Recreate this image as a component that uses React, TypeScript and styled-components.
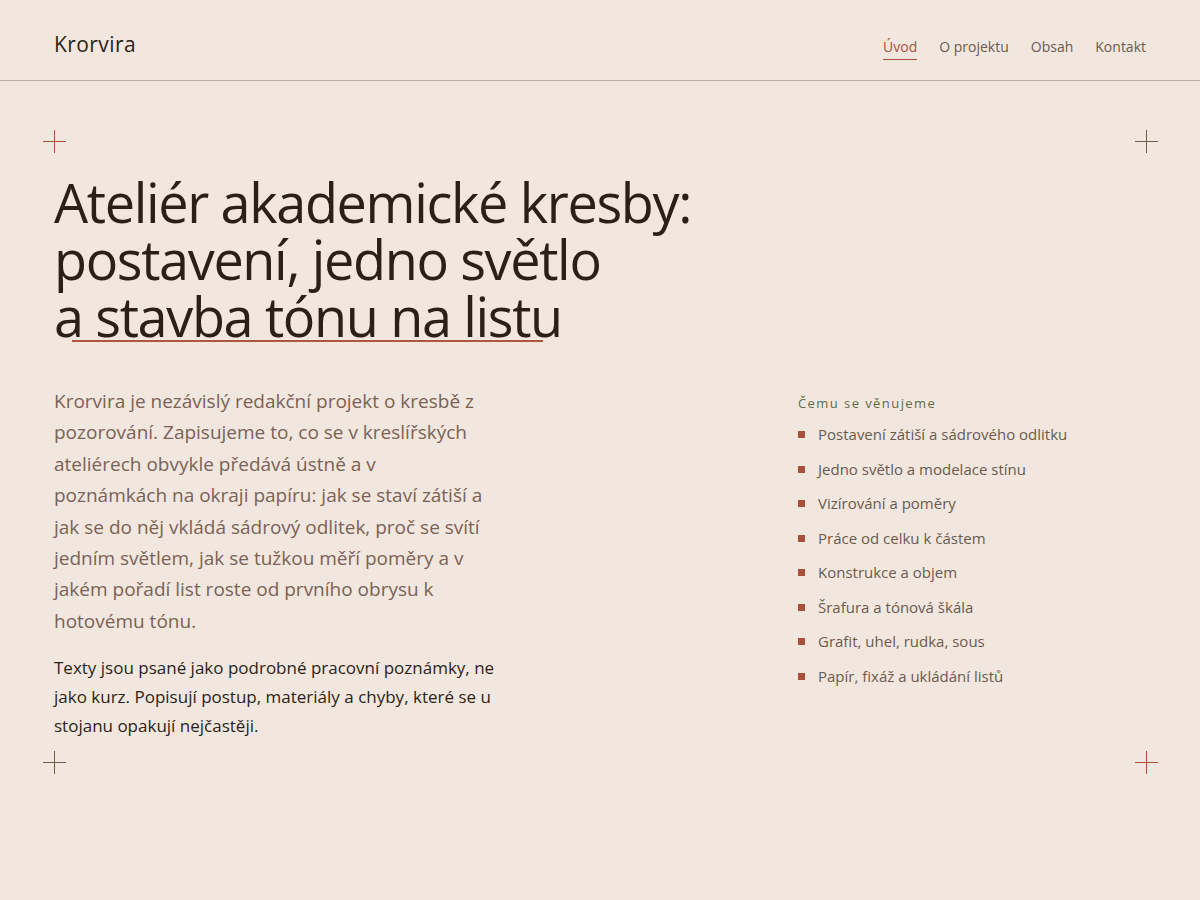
import React from "react";
import styled, { createGlobalStyle } from "styled-components";

const GlobalStyle = createGlobalStyle`
	html, body {
		margin: 0;
		padding: 0;
		background: #f2e7de;
	}
	body {
		font-family: "Open Sans", "Noto Sans", sans-serif;
		color: #2b1f18;
	}
	* {
		box-sizing: border-box;
	}
`;

const navItems = ["Úvod", "O projektu", "Obsah", "Kontakt"];

const topics = [
	"Postavení zátiší a sádrového odlitku",
	"Jedno světlo a modelace stínu",
	"Vizírování a poměry",
	"Práce od celku k částem",
	"Konstrukce a objem",
	"Šrafura a tónová škála",
	"Grafit, uhel, rudka, sous",
	"Papír, fixáž a ukládání listů",
];

const App = () => {
	return (
		<Page>
			<GlobalStyle />
			<Header>
				<Logo>Krorvira</Logo>
				<Nav>
					{navItems.map((item, i) => (
						<NavLink key={item} href="#" active={i === 0}>
							{item}
						</NavLink>
					))}
				</Nav>
			</Header>

			<Main>
				<Frame>
					<Cross tone="accent" corner="tl" />
					<Cross tone="olive" corner="tr" />
					<Cross tone="olive" corner="bl" />
					<Cross tone="accent" corner="br" />

					<Title>
						Ateliér akademické kresby:
						<br />
						postavení, jedno světlo
						<br />
						<Underlined>a stavba tónu na listu</Underlined>
					</Title>

					<Columns>
						<Intro>
							<Lead>
								Krorvira je nezávislý redakční projekt o kresbě z pozorování.
								Zapisujeme to, co se v kreslířských ateliérech obvykle předává
								ústně a v poznámkách na okraji papíru: jak se staví zátiší a jak
								se do něj vkládá sádrový odlitek, proč se svítí jedním světlem,
								jak se tužkou měří poměry a v jakém pořadí list roste od
								prvního obrysu k hotovému tónu.
							</Lead>
							<Body>
								Texty jsou psané jako podrobné pracovní poznámky, ne jako kurz.
								Popisují postup, materiály a chyby, které se u stojanu opakují
								nejčastěji.
							</Body>
						</Intro>

						<Aside>
							<AsideLabel>Čemu se věnujeme</AsideLabel>
							<TopicList>
								{topics.map((t) => (
									<Topic key={t}>{t}</Topic>
								))}
							</TopicList>
						</Aside>
					</Columns>
				</Frame>
			</Main>
		</Page>
	);
};

export default App;

const Page = styled.div`
	min-height: 900px;
	background: #f2e7de;
`;

const Header = styled.header`
	height: 81px;
	padding: 30px 54px 0;
	display: flex;
	align-items: baseline;
	justify-content: space-between;
	border-bottom: 1px solid #bcae9f;
`;

const Logo = styled.div`
	font-size: 21px;
	color: #2b1f18;
	letter-spacing: 0.02em;
`;

const Nav = styled.nav`
	display: flex;
	gap: 22px;
`;

const NavLink = styled.a<{ active?: boolean }>`
	font-size: 14px;
	text-decoration: none;
	color: ${(p) => (p.active ? "#a9503a" : "#6b5a50")};
	padding-bottom: 3px;
	border-bottom: 1px solid ${(p) => (p.active ? "#a9503a" : "transparent")};
`;

const Main = styled.main`
	padding: 49px 54px 0;
`;

const Frame = styled.section`
	position: relative;
	padding: 44px 0 34px;
`;

const crossColors = {
	accent: "#a9503a",
	olive: "#6a6248",
};

const Cross = styled.span<{ tone: "accent" | "olive"; corner: "tl" | "tr" | "bl" | "br" }>`
	position: absolute;
	width: 23px;
	height: 23px;
	${(p) => (p.corner[0] === "t" ? "top: 0;" : "bottom: 0;")}
	${(p) => (p.corner[1] === "l" ? "left: -11px;" : "right: -12px;")}
	&::before,
	&::after {
		content: "";
		position: absolute;
		background: ${(p) => crossColors[p.tone]};
	}
	&::before {
		left: 0;
		right: 0;
		top: 11px;
		height: 1px;
	}
	&::after {
		top: 0;
		bottom: 0;
		left: 11px;
		width: 1px;
	}
`;

const Title = styled.h1`
	margin: 0;
	font-size: 54px;
	font-weight: 400;
	line-height: 57px;
	letter-spacing: -0.025em;
	color: #2b1f18;
`;

const Underlined = styled.span`
	position: relative;
	&::after {
		content: "";
		position: absolute;
		left: 18px;
		right: 19px;
		bottom: 11px;
		height: 2px;
		background: #b0583a;
	}
`;

const Columns = styled.div`
	display: grid;
	grid-template-columns: 1fr 348px;
	margin-top: 41px;
`;

const Intro = styled.div`
	max-width: 450px;
`;

const Lead = styled.p`
	max-width: 435px;
	margin: 0 0 16px;
	font-size: 19px;
	line-height: 31.4px;
	color: #7a6256;
`;

const Body = styled.p`
	margin: 0;
	font-size: 17px;
	line-height: 29px;
	color: #2b1f18;
`;

const Aside = styled.aside`
	padding-top: 8px;
`;

const AsideLabel = styled.div`
	font-size: 13px;
	letter-spacing: 0.11em;
	color: #5f6b48;
	line-height: 18px;
	margin-bottom: 11px;
`;

const TopicList = styled.ul`
	list-style: none;
	margin: 0;
	padding: 0;
`;

const Topic = styled.li`
	position: relative;
	padding-left: 20px;
	font-size: 15px;
	line-height: 22px;
	margin-bottom: 12.5px;
	color: #6b5a50;
	&::before {
		content: "";
		position: absolute;
		left: 0;
		top: 8px;
		width: 7px;
		height: 7px;
		background: #a9503a;
	}
`;
